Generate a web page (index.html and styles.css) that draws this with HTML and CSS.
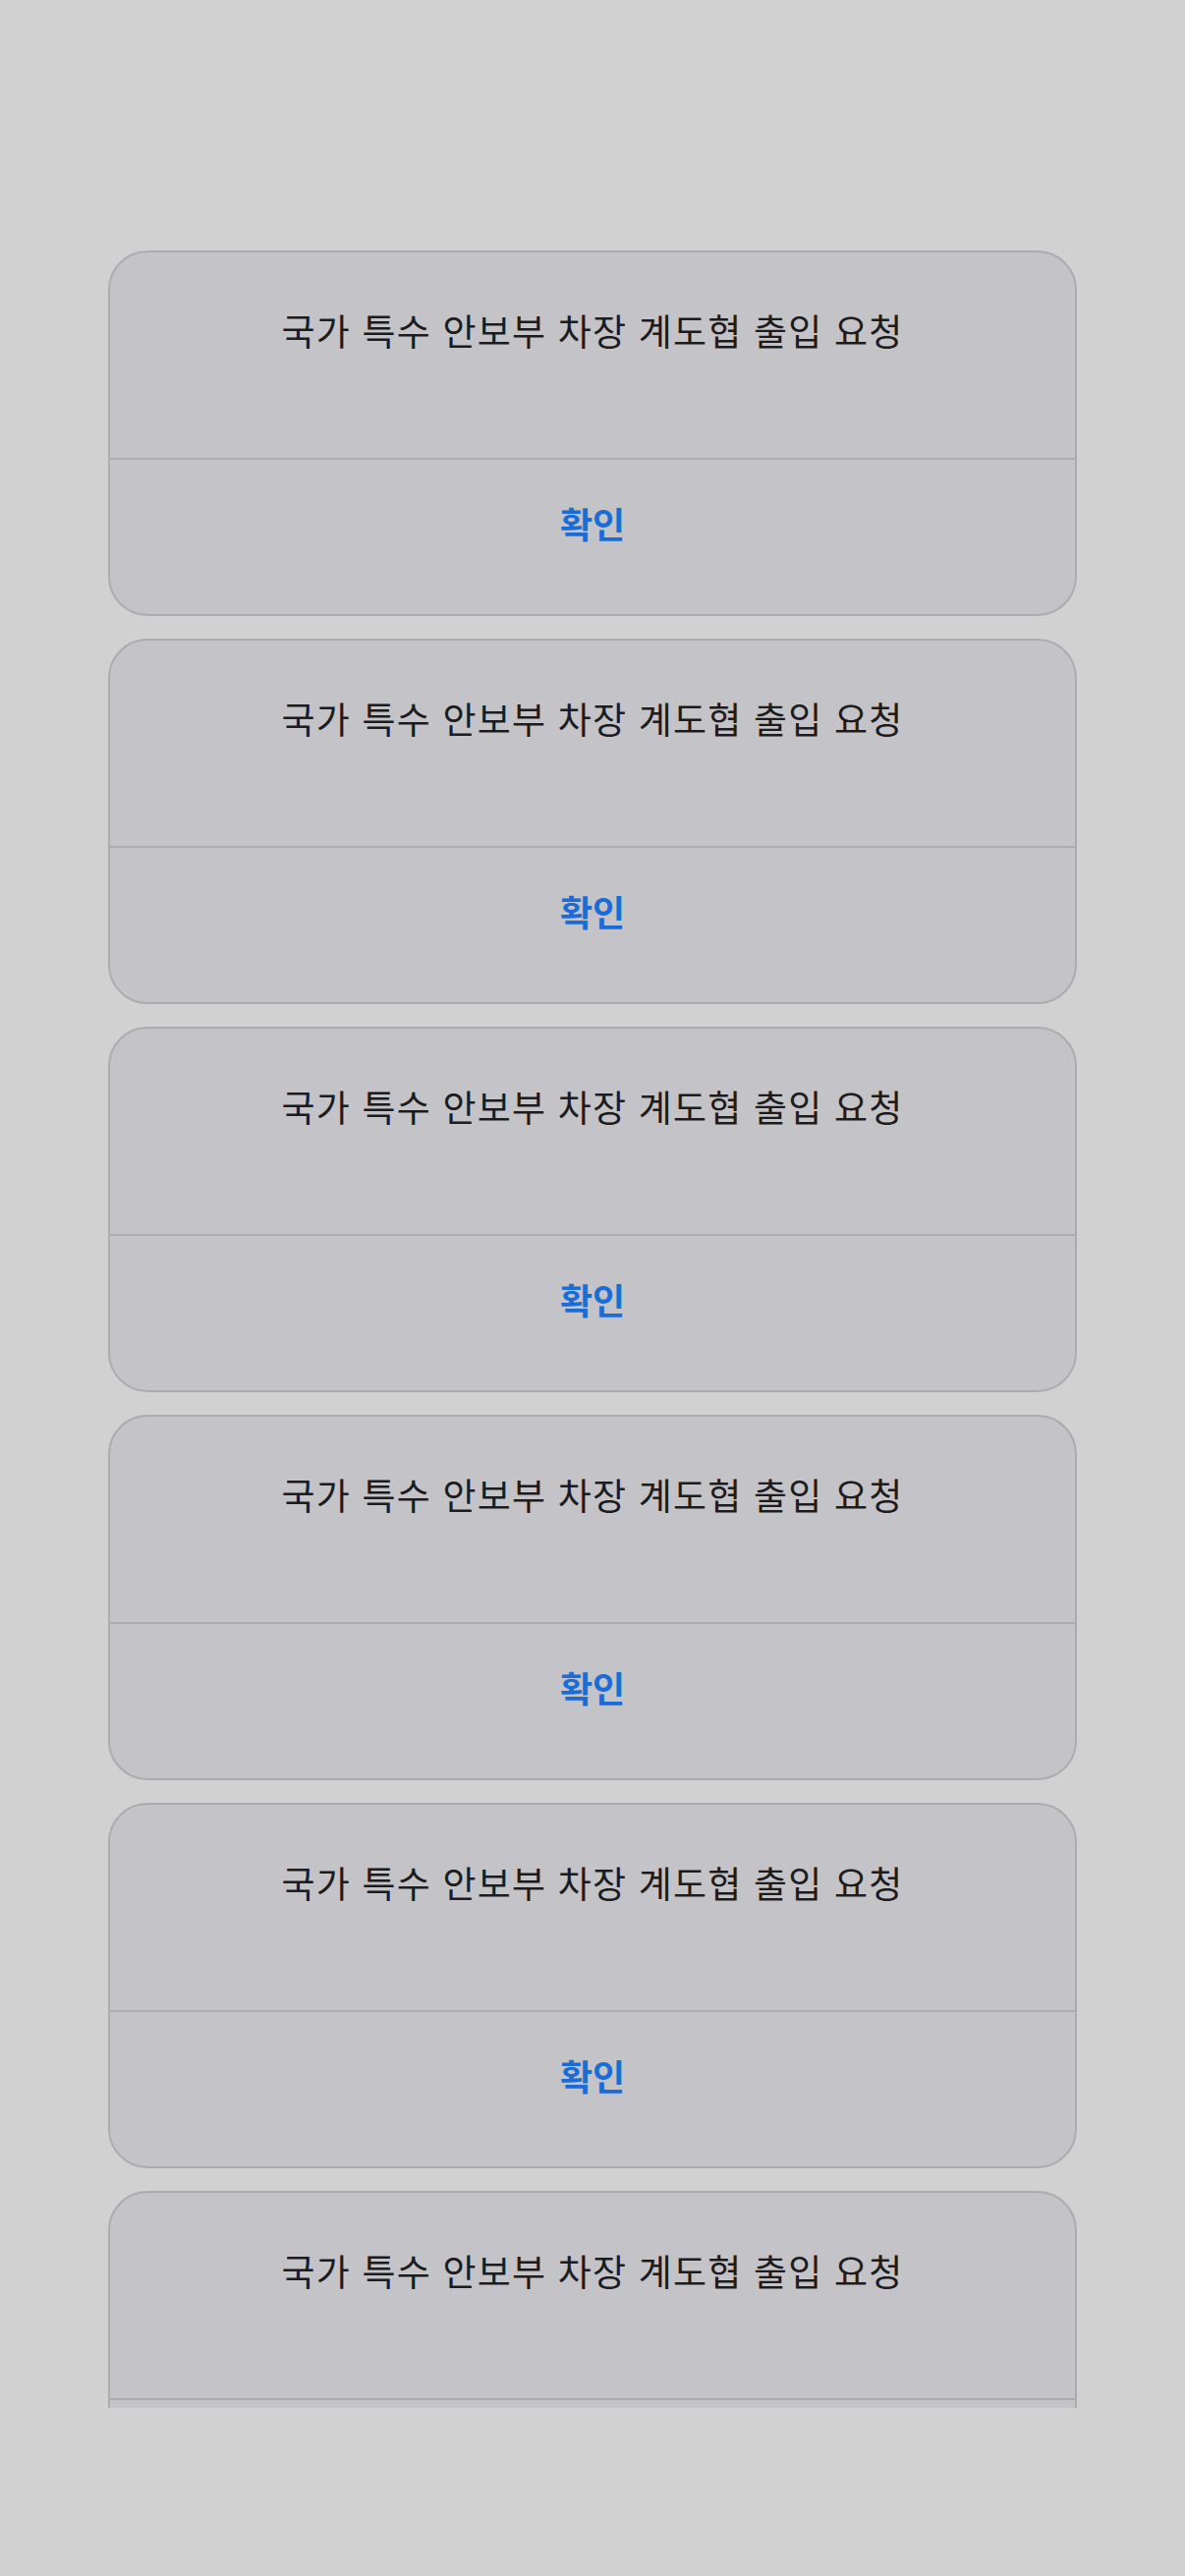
FILE: index.html
```html
<!DOCTYPE html>
<html lang="ko">
<head>
    <meta charset="UTF-8">
    <meta name="viewport" content="width=device-width, initial-scale=1.0">
    <title>출입 요청</title>
    <link rel="stylesheet" href="styles.css">
</head>
<body>
    <div class="alert-list">
        <div class="alert">
            <div class="alert-title">국가 특수 안보부 차장 계도협 출입 요청</div>
            <div class="alert-action">확인</div>
        </div>
        <div class="alert">
            <div class="alert-title">국가 특수 안보부 차장 계도협 출입 요청</div>
            <div class="alert-action">확인</div>
        </div>
        <div class="alert">
            <div class="alert-title">국가 특수 안보부 차장 계도협 출입 요청</div>
            <div class="alert-action">확인</div>
        </div>
        <div class="alert">
            <div class="alert-title">국가 특수 안보부 차장 계도협 출입 요청</div>
            <div class="alert-action">확인</div>
        </div>
        <div class="alert">
            <div class="alert-title">국가 특수 안보부 차장 계도협 출입 요청</div>
            <div class="alert-action">확인</div>
        </div>
        <!-- last one is cut off by the list -->
        <div class="alert">
            <div class="alert-title">국가 특수 안보부 차장 계도협 출입 요청</div>
        </div>
    </div>
</body>
</html>
```

FILE: styles.css
```css
body {
    margin: 0;
    padding: 0;
    background: #d1d1d1;
    font-family: "Noto Sans CJK KR", "Noto Sans", sans-serif;
    min-height: 2622px;
}

.alert-list {
    margin: 255px 110px 0;
    height: 2196px;
    overflow: hidden;
    display: flex;
    flex-direction: column;
    gap: 23px;
}

.alert {
    flex: none;
    height: 372px;
    box-sizing: border-box;
    background: #c4c3c8;
    border: 2px solid #acacb0;
    border-radius: 40px;
    display: flex;
    flex-direction: column;
}

.alert-title {
    flex: none;
    height: 211px;
    box-sizing: border-box;
    padding-top: 58px;
    text-align: center;
    font-size: 37px;
    line-height: 43px;
    letter-spacing: 1.2px;
    color: #1c1c1e;
    border-bottom: 2px solid #acacb0;
}

.alert-action {
    padding-top: 43px;
    text-align: center;
    font-size: 36px;
    line-height: 42px;
    font-weight: 700;
    color: #1a6dd6;
}
```
